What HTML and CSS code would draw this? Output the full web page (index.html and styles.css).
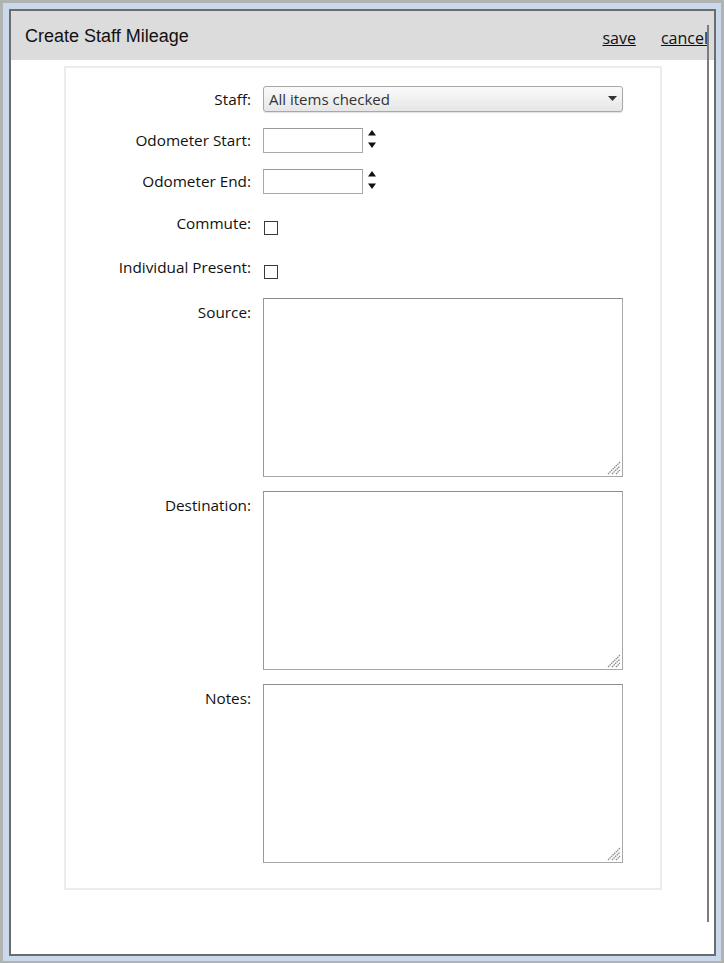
FILE: index.html
```html
<!DOCTYPE html>
<html>
<head>
<meta charset="utf-8">
<link rel="stylesheet" href="styles.css">
</head>
<body>
<div class="frame">
  <div class="dialog">
    <div class="header">
      <div class="title">Create Staff Mileage</div>
      <div class="actions">
        <a class="action" href="#">save</a>
        <a class="action" href="#">cancel</a>
      </div>
    </div>
    <div class="body">
      <div class="panel">
        <div class="row row-select">
          <div class="label">Staff:</div>
          <div class="select">
            <span class="select-text">All items checked</span>
            <svg class="select-arrow" width="9" height="5" viewBox="0 0 9 5"><path d="M0 0H9L4.5 5Z" fill="#333"/></svg>
          </div>
        </div>
        <div class="row row-num">
          <div class="label">Odometer Start:</div>
          <div class="num"></div>
          <svg class="spin" width="10" height="22" viewBox="0 0 10 22"><path d="M1 7.5L5 2L9 7.5Z" fill="#111"/><path d="M1 14.5H9L5 20Z" fill="#111"/></svg>
        </div>
        <div class="row row-num">
          <div class="label">Odometer End:</div>
          <div class="num"></div>
          <svg class="spin" width="10" height="22" viewBox="0 0 10 22"><path d="M1 7.5L5 2L9 7.5Z" fill="#111"/><path d="M1 14.5H9L5 20Z" fill="#111"/></svg>
        </div>
        <div class="row row-check first-check">
          <div class="label">Commute:</div>
          <div class="check"></div>
        </div>
        <div class="row row-check second-check">
          <div class="label">Individual Present:</div>
          <div class="check"></div>
        </div>
        <div class="row row-area first-area">
          <div class="label label-area">Source:</div>
          <div class="area"><svg class="grip" width="14" height="14" viewBox="0 0 14 14"><path d="M1 13L13 1M5 13L13 5M9 13L13 9" stroke="#8a8a8a" stroke-width="1.3" stroke-dasharray="1.5 0.7"/></svg></div>
        </div>
        <div class="row row-area">
          <div class="label label-area">Destination:</div>
          <div class="area"><svg class="grip" width="14" height="14" viewBox="0 0 14 14"><path d="M1 13L13 1M5 13L13 5M9 13L13 9" stroke="#8a8a8a" stroke-width="1.3" stroke-dasharray="1.5 0.7"/></svg></div>
        </div>
        <div class="row row-area">
          <div class="label label-area">Notes:</div>
          <div class="area"><svg class="grip" width="14" height="14" viewBox="0 0 14 14"><path d="M1 13L13 1M5 13L13 5M9 13L13 9" stroke="#8a8a8a" stroke-width="1.3" stroke-dasharray="1.5 0.7"/></svg></div>
        </div>
      </div>
    </div>
    <div class="scrollbar"></div>
  </div>
</div>
</body>
</html>
```

FILE: styles.css
```css
html, body {
  margin: 0;
  padding: 0;
}
body {
  width: 724px;
  height: 963px;
  background: #b1b3b1;
  overflow: hidden;
  font-family: "Open Sans", "DejaVu Sans", sans-serif;
}
.frame {
  box-sizing: border-box;
  margin: 3px 0 0 3px;
  width: 718px;
  height: 958px;
  border-style: solid;
  border-color: #c9d8ea;
  border-width: 6px 5px 5px 6px;
}
.dialog {
  position: relative;
  box-sizing: border-box;
  height: 100%;
  border: 2px solid #6c6c6c;
  background: #ffffff;
}
.header {
  height: 49px;
  background: #dcdcdc;
  display: flex;
  align-items: center;
  justify-content: space-between;
  padding: 0 6px 0 14px;
}
.title {
  font-family: "Liberation Sans", Arial, sans-serif;
  font-size: 18px;
  color: #111;
  margin-top: 1px;
}
.actions {
  display: flex;
  gap: 25px;
  margin-top: 4px;
}
.action {
  font-family: "Open Sans", sans-serif;
  font-size: 16px;
  color: #111;
  text-decoration: underline;
}
.body {
  padding: 6px 0 0 53px;
}
.panel {
  box-sizing: border-box;
  width: 598px;
  height: 824px;
  border: 2px solid #ececec;
  padding-top: 18px;
}
.row {
  display: flex;
  align-items: flex-start;
  gap: 12px;
}
.label {
  width: 185px;
  flex: none;
  text-align: right;
  font-size: 15.3px;
  line-height: 20px;
  color: #111;
}
.row-select .label {
  padding-top: 3px;
}
.select {
  box-sizing: border-box;
  width: 360px;
  height: 26px;
  border: 1px solid #a8a8a8;
  border-radius: 3px;
  background: linear-gradient(#fafafa, #e6e6e6);
  box-shadow: 0 1px 1px rgba(0,0,0,0.12);
  display: flex;
  align-items: center;
  justify-content: space-between;
  padding: 0 5px 0 5px;
}
.select-text {
  font-size: 15px;
  color: #333;
}
.select-arrow {
  display: block;
  margin-top: -2px;
}
.row-num {
  margin-top: 16px;
}
.row-num .label {
  padding-top: 2px;
}
.num {
  box-sizing: border-box;
  width: 100px;
  height: 25px;
  border: 1px solid #a9a9a9;
  border-top-color: #999;
  background: #fff;
}
.spin {
  display: block;
  margin-left: -8px;
}
.first-check {
  margin-top: 20px;
}
.second-check {
  margin-top: 23px;
}
.row-check .label {
  margin-top: -1px;
}
.check {
  box-sizing: border-box;
  width: 14px;
  height: 14px;
  margin-top: 7px;
  margin-left: 1px;
  border: 1px solid #3a3a3a;
  background: #fff;
}
.row-area {
  margin-top: 14px;
}
.first-area {
  margin-top: 19px;
}
.label-area {
  padding-top: 4px;
}
.area {
  position: relative;
  box-sizing: border-box;
  width: 360px;
  height: 179px;
  border: 1px solid #a8a8a8;
  border-top-color: #8c8c8c;
  border-left-color: #999;
  background: #fff;
}
.grip {
  position: absolute;
  right: 1px;
  bottom: 1px;
  display: block;
}
.scrollbar {
  position: absolute;
  left: 696px;
  top: 14px;
  width: 2px;
  height: 897px;
  background: #7c7c7c;
}
```
